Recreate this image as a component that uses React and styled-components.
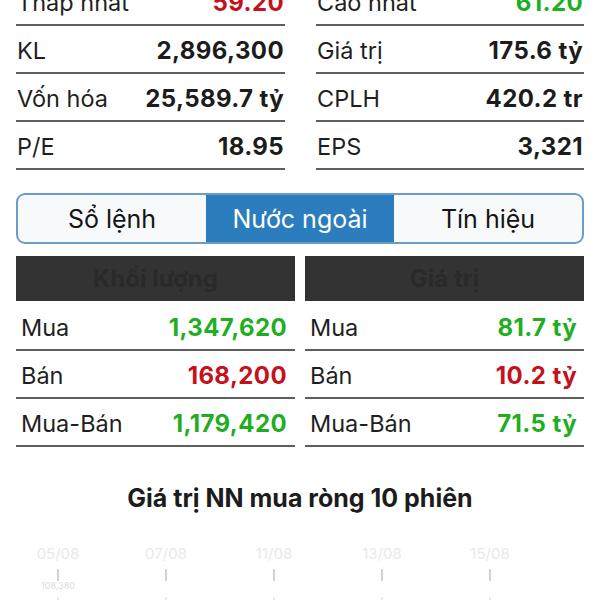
import styled, { createGlobalStyle } from 'styled-components'

const GlobalStyle = createGlobalStyle`
  html, body {
    margin: 0;
    padding: 0;
    background: #ffffff;
  }
  body {
    font-family: Inter, "Noto Sans", "Liberation Sans", sans-serif;
    color: #1c1c1c;
  }
`

const Page = styled.div`
  width: 600px;
  height: 600px;
  overflow: hidden;
  background: #ffffff;
`

const Content = styled.div`
  margin-top: -22px;
  display: flex;
  flex-direction: column;
`

const StatsGrid = styled.div`
  display: grid;
  grid-template-columns: 269px 268px;
  column-gap: 31px;
  padding: 0 16px;
`

const StatColumn = styled.div`
  display: flex;
  flex-direction: column;
`

const StatRow = styled.div`
  box-sizing: border-box;
  height: 48px;
  display: flex;
  align-items: center;
  justify-content: space-between;
  padding: 2px 1px 0;
  border-bottom: 2px solid #5f5f5f;
`

const Label = styled.span`
  font-size: 23.5px;
  font-weight: 400;
  color: #1f1f1f;
`

const Value = styled.span`
  font-size: 24px;
  font-weight: 700;
  letter-spacing: 0.4px;
  color: ${({ $tone }) => ($tone === 'up' ? '#1fae1f' : $tone === 'down' ? '#c4111b' : '#1c1c1c')};
`

const Tabs = styled.div`
  box-sizing: border-box;
  margin: 23px 16px 0;
  height: 51px;
  display: grid;
  grid-template-columns: repeat(3, 1fr);
  border: 2px solid #6a9ec6;
  border-radius: 9px;
  overflow: hidden;
  background: #f8f9fb;
`

const Tab = styled.div`
  display: flex;
  align-items: center;
  justify-content: center;
  font-size: 25px;
  color: ${({ $active }) => ($active ? '#ffffff' : '#141414')};
  background: ${({ $active }) => ($active ? '#2b7dbd' : 'transparent')};
`

const ForeignGrid = styled.div`
  margin-top: 12px;
  display: grid;
  grid-template-columns: 279px 279px;
  column-gap: 10px;
  padding: 0 16px;
`

const ForeignColumn = styled.div`
  display: flex;
  flex-direction: column;
`

const HeaderBar = styled.div`
  height: 45px;
  background: #333333;
  display: flex;
  align-items: center;
  justify-content: center;
  font-size: 24px;
  font-weight: 700;
  color: #2a2a2a;
`

const ForeignList = styled.div`
  padding-top: 2px;
  display: flex;
  flex-direction: column;
`

const ForeignRow = styled.div`
  box-sizing: border-box;
  height: 48px;
  display: flex;
  align-items: center;
  justify-content: space-between;
  padding: ${({ $side }) => ($side === 'right' ? '2px 7px 0 5px' : '2px 8px 0 5px')};
  border-bottom: 2px solid #5f5f5f;
`

const ChartTitle = styled.h2`
  margin: 36px 0 0;
  text-align: center;
  font-size: 25px;
  font-weight: 700;
  color: #1c1c1c;
`

const ChartBox = styled.div`
  margin-top: 29px;
  height: 80px;
`

const stats = [
  [
    { label: 'Thấp nhất', value: '59.20', tone: 'down' },
    { label: 'KL', value: '2,896,300' },
    { label: 'Vốn hóa', value: '25,589.7 tỷ' },
    { label: 'P/E', value: '18.95' },
  ],
  [
    { label: 'Cao nhất', value: '61.20', tone: 'up' },
    { label: 'Giá trị', value: '175.6 tỷ' },
    { label: 'CPLH', value: '420.2 tr' },
    { label: 'EPS', value: '3,321' },
  ],
]

const foreign = [
  {
    title: 'Khối lượng',
    side: 'left',
    rows: [
      { label: 'Mua', value: '1,347,620', tone: 'up' },
      { label: 'Bán', value: '168,200', tone: 'down' },
      { label: 'Mua-Bán', value: '1,179,420', tone: 'up' },
    ],
  },
  {
    title: 'Giá trị',
    side: 'right',
    rows: [
      { label: 'Mua', value: '81.7 tỷ', tone: 'up' },
      { label: 'Bán', value: '10.2 tỷ', tone: 'down' },
      { label: 'Mua-Bán', value: '71.5 tỷ', tone: 'up' },
    ],
  },
]

const dates = ['05/08', '07/08', '11/08', '13/08', '15/08']

function NetChart() {
  return (
    <svg width="600" height="80" viewBox="0 0 600 80">
      {dates.map((d, i) => {
        const x = 58 + i * 108
        return (
          <g key={d}>
            <text
              x={x}
              y={17}
              textAnchor="middle"
              fontSize="15"
              fontFamily="Inter, sans-serif"
              fill="#e9e9e9"
            >
              {d}
            </text>
            <line x1={x} y1={27} x2={x} y2={39} stroke="#b5b5b5" strokeWidth="1.2" />
            <line x1={x} y1={55} x2={x} y2={62} stroke="#d8d8d8" strokeWidth="1.2" />
          </g>
        )
      })}
      <text x={58} y={47} textAnchor="middle" fontSize="9" fontFamily="Inter, sans-serif" fill="#dcdcdc">
        108,380
      </text>
    </svg>
  )
}

export default function App() {
  return (
    <Page>
      <GlobalStyle />
      <Content>
        <StatsGrid>
          {stats.map((col, ci) => (
            <StatColumn key={ci}>
              {col.map((s) => (
                <StatRow key={s.label}>
                  <Label>{s.label}</Label>
                  <Value $tone={s.tone}>{s.value}</Value>
                </StatRow>
              ))}
            </StatColumn>
          ))}
        </StatsGrid>

        <Tabs>
          <Tab>Sổ lệnh</Tab>
          <Tab $active>Nước ngoài</Tab>
          <Tab>Tín hiệu</Tab>
        </Tabs>

        <ForeignGrid>
          {foreign.map((f) => (
            <ForeignColumn key={f.title}>
              <HeaderBar>{f.title}</HeaderBar>
              <ForeignList>
                {f.rows.map((r) => (
                  <ForeignRow key={r.label} $side={f.side}>
                    <Label>{r.label}</Label>
                    <Value $tone={r.tone}>{r.value}</Value>
                  </ForeignRow>
                ))}
              </ForeignList>
            </ForeignColumn>
          ))}
        </ForeignGrid>

        <ChartTitle>Giá trị NN mua ròng 10 phiên</ChartTitle>
        <ChartBox>
          <NetChart />
        </ChartBox>
      </Content>
    </Page>
  )
}
